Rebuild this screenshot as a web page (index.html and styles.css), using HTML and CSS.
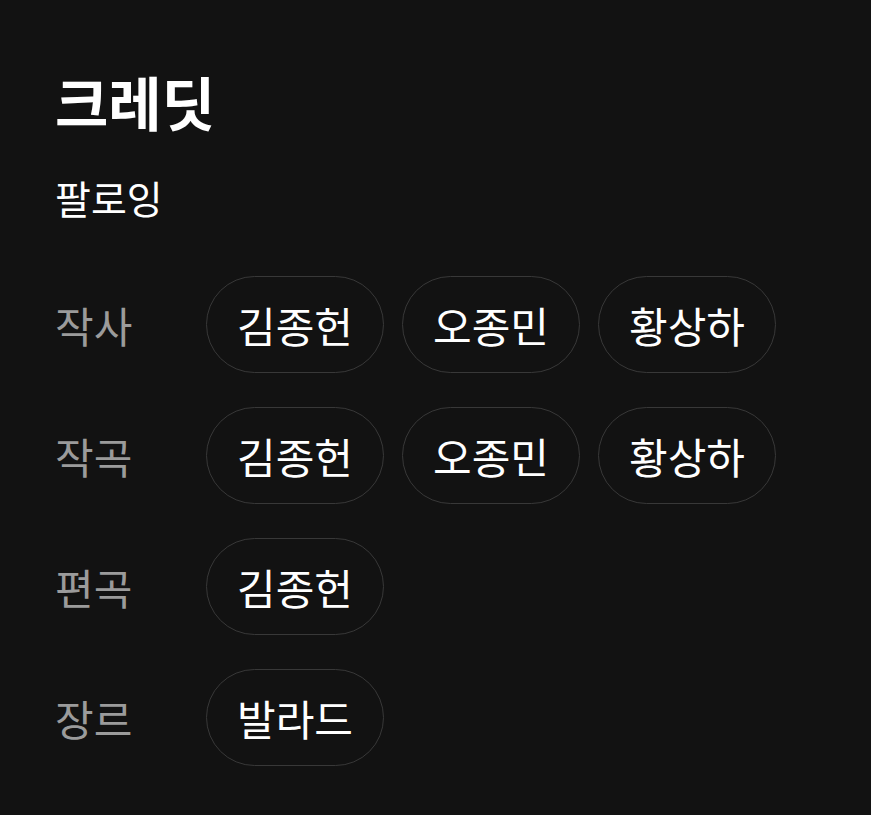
FILE: index.html
```html
<!DOCTYPE html>
<html lang="ko">
<head>
  <meta charset="UTF-8">
  <meta name="viewport" content="width=device-width, initial-scale=1.0">
  <title>크레딧</title>
  <link rel="stylesheet" href="styles.css">
</head>
<body>
  <section class="credits">
    <h1>크레딧</h1>
    <div class="artist">팔로잉</div>
    <dl class="credit-list">
      <div class="credit-row">
        <dt>작사</dt>
        <dd>
          <a class="chip">김종헌</a>
          <a class="chip">오종민</a>
          <a class="chip">황상하</a>
        </dd>
      </div>
      <div class="credit-row">
        <dt>작곡</dt>
        <dd>
          <a class="chip">김종헌</a>
          <a class="chip">오종민</a>
          <a class="chip">황상하</a>
        </dd>
      </div>
      <div class="credit-row">
        <dt>편곡</dt>
        <dd>
          <a class="chip">김종헌</a>
        </dd>
      </div>
      <div class="credit-row">
        <dt>장르</dt>
        <dd>
          <a class="chip">발라드</a>
        </dd>
      </div>
    </dl>
  </section>
</body>
</html>
```

FILE: styles.css
```css
body {
  margin: 0;
  background-color: #121212;
  color: #ffffff;
  font-family: "Noto Sans CJK KR", "Noto Sans", sans-serif;
}
.credits {
  padding: 67px 55px 40px;
}
h1 {
  margin: 0;
  font-size: 58px;
  font-weight: 700;
  line-height: 1.2;
}
.artist {
  margin-top: 37px;
  font-size: 39px;
  line-height: 1.2;
}
.credit-list {
  margin: 56px 0 0;
  display: flex;
  flex-direction: column;
  gap: 34px;
}
.credit-row {
  display: flex;
  align-items: center;
}
.credit-row dt {
  width: 151px;
  flex-shrink: 0;
  font-size: 42px;
  color: #9b9b9b;
}
.credit-row dd {
  margin: 0;
  display: flex;
  gap: 18px;
}
.chip {
  box-sizing: border-box;
  width: 178px;
  height: 97px;
  display: flex;
  align-items: center;
  justify-content: center;
  border: 1px solid #383838;
  border-radius: 49px;
  font-size: 42px;
  color: #ffffff;
  cursor: pointer;
}
```
